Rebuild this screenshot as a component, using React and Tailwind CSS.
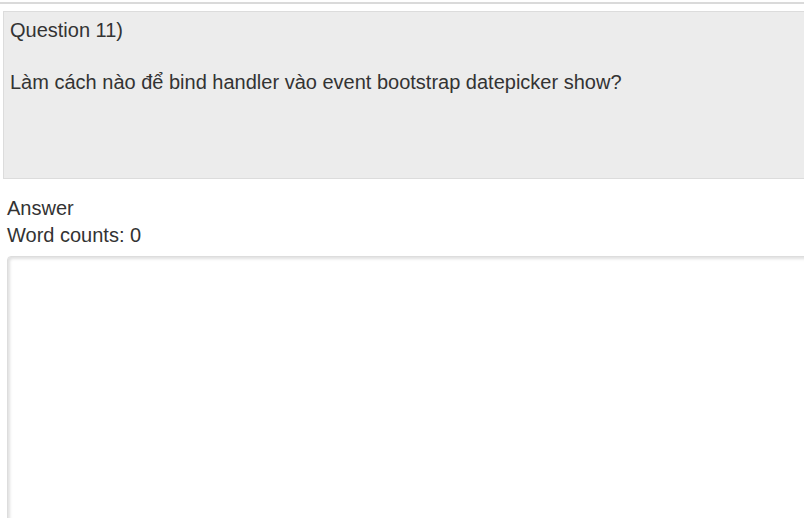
export default function App() {
  return (
    <div className="w-[804px] h-[530px] bg-white">
      <div className="h-[518px] overflow-hidden text-[20px] text-[#333] font-['Liberation_Sans',Arial,sans-serif]">
        <div className="mt-[2px] h-[2px] bg-[#dadada]" />
        <div className="ml-[3px] mt-[7px] h-[168px] w-[820px] border border-[#dcdcdc] bg-[#ececec] px-[6px] pt-[5px] leading-[26px]">
          <p>Question 11)</p>
          <p className="mt-[26px]">Làm cách nào để bind handler vào event bootstrap datepicker show?</p>
        </div>
        <div className="ml-[7px] mt-[16px] leading-[27px]">
          <div>Answer</div>
          <div>Word counts: 0</div>
        </div>
        <textarea className="ml-[7px] mt-[7px] block h-[300px] w-[820px] resize-none rounded-[4px] border border-[#ddd] bg-white shadow-[inset_2px_2px_3px_rgba(0,0,0,0.12)] outline-none" />
      </div>
    </div>
  );
}
